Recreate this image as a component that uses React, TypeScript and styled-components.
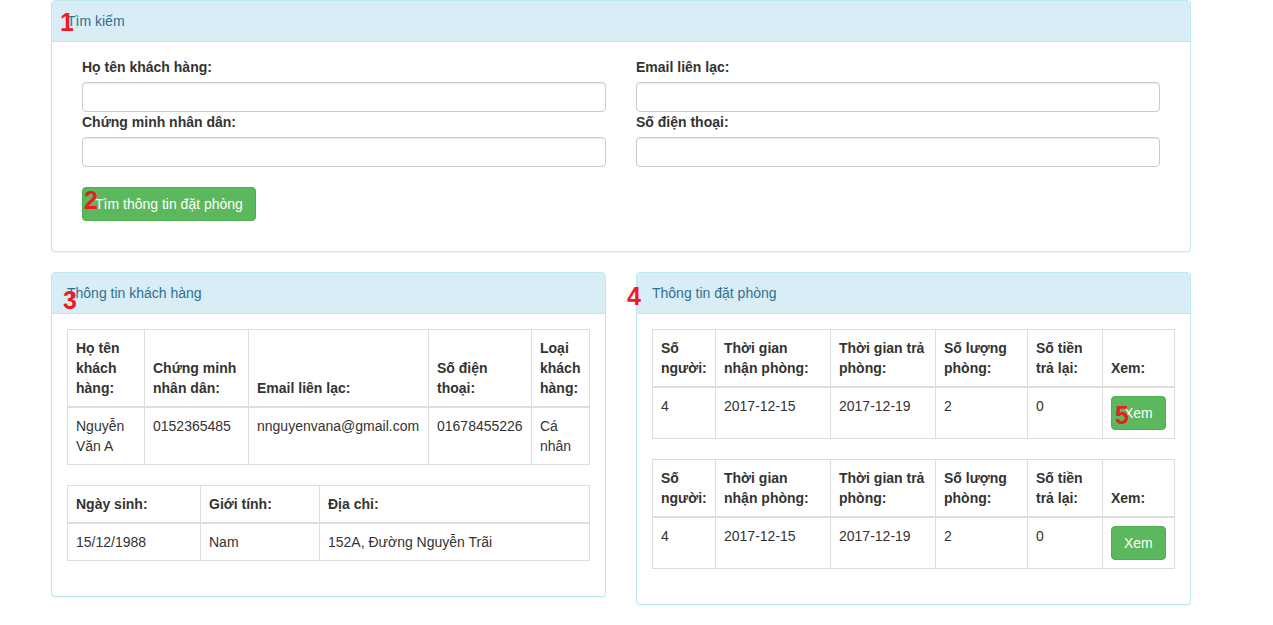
import React from "react";
import styled, { createGlobalStyle } from "styled-components";

const GlobalStyle = createGlobalStyle`
  * { box-sizing: border-box; }
  html, body { margin: 0; padding: 0; background: #fff; }
  body {
    font-family: "Liberation Sans", Arial, Helvetica, sans-serif;
    font-size: 14px;
    line-height: 20px;
    color: #333;
  }
`;

const Page = styled.div`
  position: relative;
  width: 1273px;
  min-height: 625px;
  padding-left: 51px;
`;

const Content = styled.div`
  width: 1140px;
`;

const Panel = styled.section<{ $mb?: number }>`
  background: #fff;
  border: 1px solid #bce8f1;
  border-radius: 4px;
  box-shadow: 0 1px 1px rgba(0, 0, 0, 0.05);
  margin-bottom: ${(p) => (p.$mb ?? 20)}px;
`;

const PanelHeading = styled.div`
  padding: 10px 15px;
  background: #d9edf7;
  color: #31708f;
  border-bottom: 1px solid #bce8f1;
  border-radius: 3px 3px 0 0;
  font-size: 14px;
  line-height: 20px;
`;

const PanelBody = styled.div`
  padding: 15px;
`;

const FormGrid = styled.div`
  display: grid;
  grid-template-columns: 524px 524px;
  column-gap: 30px;
  padding: 0 15px;
`;

const Field = styled.div`
  display: flex;
  flex-direction: column;
`;

const Label = styled.label`
  font-weight: bold;
  line-height: 20px;
  margin-bottom: 5px;
`;

const Input = styled.input`
  height: 30px;
  width: 100%;
  border: 1px solid #ccc;
  border-radius: 4px;
  box-shadow: inset 0 1px 1px rgba(0, 0, 0, 0.075);
  padding: 4px 10px;
  font: inherit;
  outline: none;
`;

const ButtonRow = styled.div`
  padding: 0 15px;
  margin: 20px 0 15px;
`;

const Button = styled.button`
  display: inline-block;
  padding: 6px 12px;
  font-family: inherit;
  font-size: 14px;
  line-height: 20px;
  color: #fff;
  background: #5cb85c;
  border: 1px solid #4cae4c;
  border-radius: 4px;
  cursor: pointer;
`;

const BottomRow = styled.div`
  display: flex;
  gap: 30px;
  align-items: flex-start;
`;

const Column = styled.div`
  width: 555px;
`;

const Table = styled.table`
  width: 522px;
  table-layout: fixed;
  border-collapse: collapse;
  border-spacing: 0;
  border: 1px solid #ddd;
  margin-bottom: 20px;
`;

const Col = styled.col<{ $w: number }>`
  width: ${(p) => p.$w}px;
`;

const Th = styled.th`
  text-align: left;
  font-weight: bold;
  vertical-align: bottom;
  padding: 8px;
  line-height: 20px;
  border: 1px solid #ddd;
  border-bottom: 2px solid #ddd;
`;

const Td = styled.td`
  vertical-align: top;
  padding: 8px;
  line-height: 20px;
  border: 1px solid #ddd;
`;

const Marker = styled.span<{ $x: number; $y: number }>`
  position: absolute;
  left: ${(p) => p.$x}px;
  top: ${(p) => p.$y}px;
  font-family: "Liberation Sans", Arial, sans-serif;
  font-weight: bold;
  font-size: 25px;
  line-height: 25px;
  color: #ed1c24;
  pointer-events: none;
`;

const bookings = [
  { people: 4, checkin: "2017-12-15", checkout: "2017-12-19", rooms: 2, refund: 0 },
  { people: 4, checkin: "2017-12-15", checkout: "2017-12-19", rooms: 2, refund: 0 },
];

export default function App() {
  return (
    <>
      <GlobalStyle />
      <Page>
        <Content>
          <Panel>
            <PanelHeading>Tìm kiếm</PanelHeading>
            <PanelBody>
              <FormGrid>
                <Field>
                  <Label>Họ tên khách hàng:</Label>
                  <Input />
                </Field>
                <Field>
                  <Label>Email liên lạc:</Label>
                  <Input />
                </Field>
                <Field>
                  <Label>Chứng minh nhân dân:</Label>
                  <Input />
                </Field>
                <Field>
                  <Label>Số điện thoại:</Label>
                  <Input />
                </Field>
              </FormGrid>
              <ButtonRow>
                <Button>Tìm thông tin đặt phòng</Button>
              </ButtonRow>
            </PanelBody>
          </Panel>

          <BottomRow>
            <Column>
              <Panel>
                <PanelHeading>Thông tin khách hàng</PanelHeading>
                <PanelBody>
                  <Table>
                    <colgroup>
                      <Col $w={77} />
                      <Col $w={104} />
                      <Col $w={180} />
                      <Col $w={103} />
                      <Col $w={58} />
                    </colgroup>
                    <thead>
                      <tr>
                        <Th>Họ tên khách hàng:</Th>
                        <Th>Chứng minh nhân dân:</Th>
                        <Th>Email liên lạc:</Th>
                        <Th>Số điện thoại:</Th>
                        <Th>Loại khách hàng:</Th>
                      </tr>
                    </thead>
                    <tbody>
                      <tr>
                        <Td>Nguyễn Văn A</Td>
                        <Td>0152365485</Td>
                        <Td>nnguyenvana@gmail.com</Td>
                        <Td>01678455226</Td>
                        <Td>Cá nhân</Td>
                      </tr>
                    </tbody>
                  </Table>
                  <Table>
                    <colgroup>
                      <Col $w={133} />
                      <Col $w={119} />
                      <Col $w={270} />
                    </colgroup>
                    <thead>
                      <tr>
                        <Th>Ngày sinh:</Th>
                        <Th>Giới tính:</Th>
                        <Th>Địa chỉ:</Th>
                      </tr>
                    </thead>
                    <tbody>
                      <tr>
                        <Td>15/12/1988</Td>
                        <Td>Nam</Td>
                        <Td>152A, Đường Nguyễn Trãi</Td>
                      </tr>
                    </tbody>
                  </Table>
                </PanelBody>
              </Panel>
            </Column>

            <Column>
              <Panel>
                <PanelHeading>Thông tin đặt phòng</PanelHeading>
                <PanelBody>
                  {bookings.map((b, i) => (
                    <Table key={i}>
                      <colgroup>
                        <Col $w={63} />
                        <Col $w={115} />
                        <Col $w={105} />
                        <Col $w={92} />
                        <Col $w={75} />
                        <Col $w={72} />
                      </colgroup>
                      <thead>
                        <tr>
                          <Th>Số người:</Th>
                          <Th>Thời gian nhận phòng:</Th>
                          <Th>Thời gian trả phòng:</Th>
                          <Th>Số lượng phòng:</Th>
                          <Th>Số tiền trả lại:</Th>
                          <Th>Xem:</Th>
                        </tr>
                      </thead>
                      <tbody>
                        <tr>
                          <Td>{b.people}</Td>
                          <Td>{b.checkin}</Td>
                          <Td>{b.checkout}</Td>
                          <Td>{b.rooms}</Td>
                          <Td>{b.refund}</Td>
                          <Td>
                            <Button>Xem</Button>
                          </Td>
                        </tr>
                      </tbody>
                    </Table>
                  ))}
                </PanelBody>
              </Panel>
            </Column>
          </BottomRow>
        </Content>

        <Marker $x={60} $y={10}>1</Marker>
        <Marker $x={84} $y={188}>2</Marker>
        <Marker $x={63} $y={288}>3</Marker>
        <Marker $x={627} $y={284}>4</Marker>
        <Marker $x={1115} $y={403}>5</Marker>
      </Page>
    </>
  );
}
